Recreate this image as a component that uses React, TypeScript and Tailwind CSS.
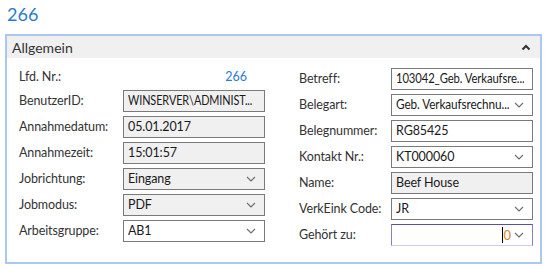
import React from "react";

const font = { fontFamily: 'Lato, "Segoe UI", "Noto Sans", sans-serif' };

function Chevron() {
  return (
    <svg width="10" height="6" viewBox="0 0 10 6" className="shrink-0">
      <path d="M1 1 L5 5 L9 1" fill="none" stroke="#6b6b6b" strokeWidth="1.1" />
    </svg>
  );
}

type FieldProps = {
  value: string;
  ro?: boolean;
  select?: boolean;
  focus?: boolean;
  squeeze?: "a" | "b" | "c";
};

function Field({ value, ro, select, focus, squeeze }: FieldProps) {
  if (focus) {
    return (
      <div
        className="h-[22px] w-[142px] flex items-center justify-end pr-[8px] border border-[#5a4fa0] border-b-[#d0cbe8] bg-white"
        style={{ borderLeftColor: "#8a80c0", borderRightColor: "#8a80c0" }}
      >
        <span className="relative text-[13px] leading-[16px] text-[#222] mr-[3px]">
          <span className="absolute left-0 top-0 h-[16px] w-[1px] bg-black" />
          <span className="pl-[1px] text-[#d9822b]">0</span>
        </span>
        <Chevron />
      </div>
    );
  }
  const sq =
    squeeze === "a"
      ? "inline-block origin-left scale-x-[0.87]"
      : squeeze === "b"
      ? "inline-block origin-left scale-x-[0.94]"
      : squeeze === "c"
      ? "inline-block origin-left scale-x-[0.9]"
      : "";
  return (
    <div
      className={`h-[22px] w-[142px] flex items-center border border-[#7a7a7a] pl-[4px] pr-[8px] ${
        ro ? "bg-[#f0f0f0]" : "bg-white"
      }`}
    >
      <span className="flex-1 text-[12.5px] tracking-[-0.1px] leading-[18px] text-[#1a1a1a] whitespace-nowrap overflow-hidden">
        <span className={sq}>{value}</span>
      </span>
      {select && <Chevron />}
    </div>
  );
}

function Row({ label, children, labelW }: { label: string; children: React.ReactNode; labelW: string }) {
  return (
    <div className="flex items-center h-[22px]">
      <div className={`${labelW} shrink-0 text-[12.5px] tracking-[-0.1px] leading-[18px] text-[#333] whitespace-nowrap`}>
        {label}
      </div>
      {children}
    </div>
  );
}

export default function App() {
  return (
    <div className="w-[547px] h-[268px] bg-white overflow-hidden" style={font}>
      <div className="pl-[7px] pt-[3px] h-[34px] text-[18px] leading-[22px] text-[#2a7bd3]">266</div>
      <div className="ml-[5px] w-[537px] h-[230px] border-2 border-[#a9c9f0] bg-white">
        <div className="h-[22px] bg-[#f0f0f0] flex items-center justify-between pl-[5px] pr-[9px]">
          <span className="text-[14px] text-[#333]">Allgemein</span>
          <svg width="10" height="7" viewBox="0 0 10 7">
            <path d="M1.5 5.5 L5 2 L8.5 5.5" fill="none" stroke="#333" strokeWidth="2" />
          </svg>
        </div>
        <div className="flex pl-[12px] pt-[10px]">
          <div className="flex flex-col gap-[4px] w-[280px]">
            <div className="flex items-center h-[18px]">
              <div className="w-[104px] text-[12.5px] tracking-[-0.1px] text-[#333]">Lfd. Nr.:</div>
              <div className="w-[124px] text-right text-[12.5px] text-[#2a7bd3]">266</div>
            </div>
            <Row label="BenutzerID:" labelW="w-[104px]">
              <Field value="WINSERVER\ADMINIST..." ro squeeze="a" />
            </Row>
            <Row label="Annahmedatum:" labelW="w-[104px]">
              <Field value="05.01.2017" ro />
            </Row>
            <Row label="Annahmezeit:" labelW="w-[104px]">
              <Field value="15:01:57" ro />
            </Row>
            <Row label="Jobrichtung:" labelW="w-[104px]">
              <Field value="Eingang" ro select />
            </Row>
            <Row label="Jobmodus:" labelW="w-[104px]">
              <Field value="PDF" ro select />
            </Row>
            <Row label="Arbeitsgruppe:" labelW="w-[104px]">
              <Field value="AB1" select />
            </Row>
          </div>
          <div className="flex flex-col gap-[4px]">
            <Row label="Betreff:" labelW="w-[92px]">
              <Field value="103042_Geb. Verkaufsre..." squeeze="c" />
            </Row>
            <Row label="Belegart:" labelW="w-[92px]">
              <Field value="Geb. Verkaufsrechnu..." select squeeze="b" />
            </Row>
            <Row label="Belegnummer:" labelW="w-[92px]">
              <Field value="RG85425" />
            </Row>
            <Row label="Kontakt Nr.:" labelW="w-[92px]">
              <Field value="KT000060" select />
            </Row>
            <Row label="Name:" labelW="w-[92px]">
              <Field value="Beef House" ro />
            </Row>
            <Row label="VerkEink Code:" labelW="w-[92px]">
              <Field value="JR" select />
            </Row>
            <Row label="Gehört zu:" labelW="w-[92px]">
              <Field value="" focus />
            </Row>
          </div>
        </div>
      </div>
    </div>
  );
}
